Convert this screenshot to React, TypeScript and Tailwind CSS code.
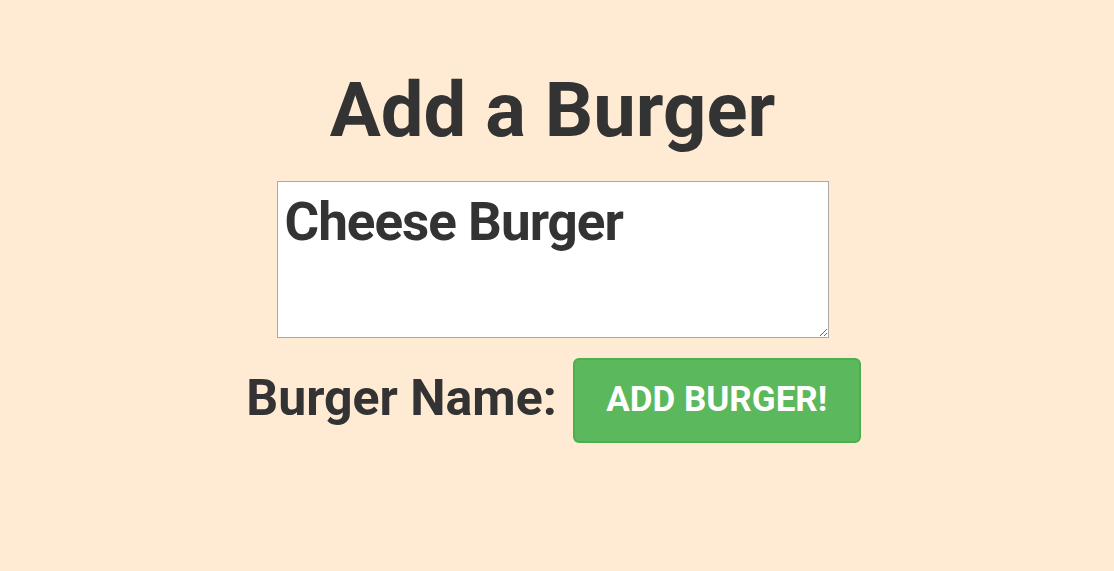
export default function App() {
  return (
    <div
      className="min-h-[571px] w-full bg-[#ffebd4] text-[#333333] pr-[9px]"
      style={{ fontFamily: "Roboto, 'Liberation Sans', sans-serif" }}
    >
      <div className="flex flex-col items-center pt-[69px]">
        <h1 className="text-[76px] font-bold leading-[1.1]">Add a Burger</h1>
        <textarea
          className="mt-[28px] w-[552px] h-[157px] bg-white border border-[#a9a9a9] px-[7px] pt-[9px] pb-[2px] text-[53px] font-bold leading-[1.2] tracking-[-1px] text-[#333333] resize-y outline-none"
          defaultValue="Cheese Burger"
        />
        <div className="mt-[20px] ml-[2px] flex items-center gap-[16px]">
          <label className="mb-[4px] text-[50px] font-bold leading-none">Burger Name:</label>
          <button className="h-[85px] w-[288px] rounded-[6px] border-2 border-[#4cae4c] bg-[#5cb85c] text-[35px] font-bold text-white">
            ADD BURGER!
          </button>
        </div>
      </div>
    </div>
  );
}
